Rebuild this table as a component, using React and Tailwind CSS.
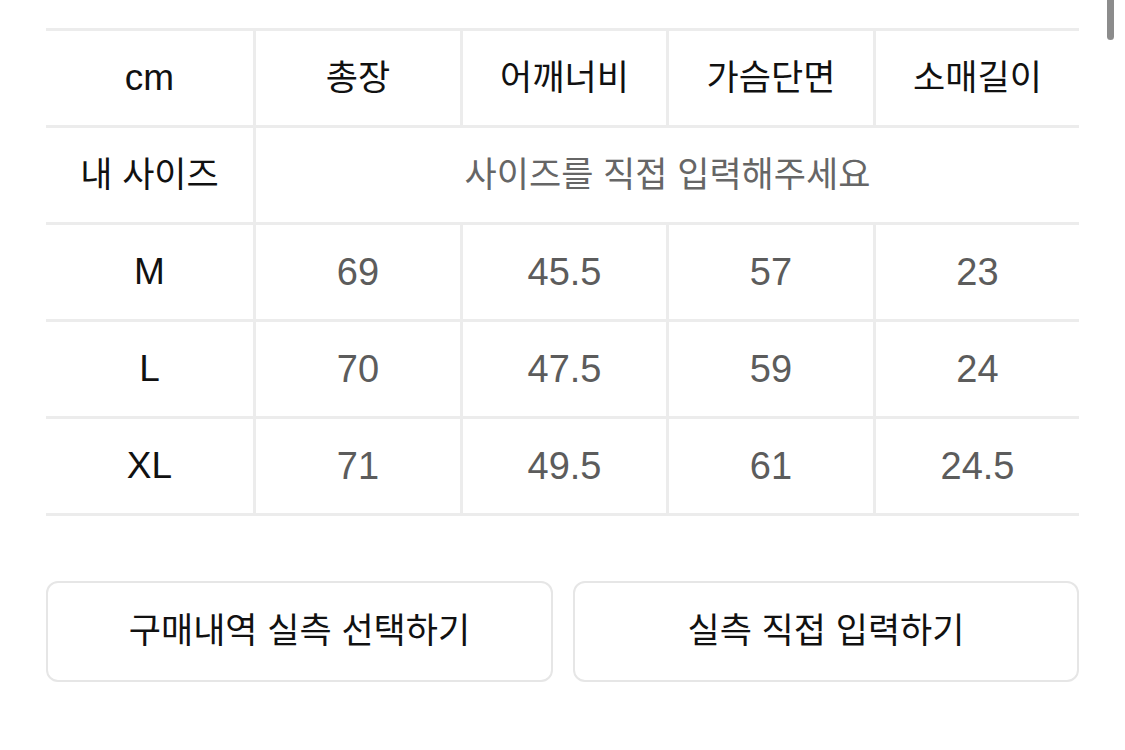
import React from 'react';

const columns = ['총장', '어깨너비', '가슴단면', '소매길이'];

const sizes = [
  { name: 'M', values: ['69', '45.5', '57', '23'] },
  { name: 'L', values: ['70', '47.5', '59', '24'] },
  { name: 'XL', values: ['71', '49.5', '61', '24.5'] },
];

const App = () => {
  return (
    <div
      className="relative w-[1125px] h-[750px] bg-white overflow-hidden"
      style={{ fontFamily: '"Liberation Sans", "Noto Sans CJK KR", sans-serif' }}
    >
      {/* scrollbar */}
      <div className="absolute right-[11px] top-[-6px] w-[7px] h-[46px] rounded-full bg-[#8c8c8c]" />

      <div className="ml-[46px] mt-[28px] w-[1033px]">
        <div className="border-t-[3px] border-[#ececec]">
          {/* header */}
          <div className="grid grid-cols-[207px_207px_206px_207px_206px] h-[97px] border-b-[3px] border-[#ececec]">
            <div className="flex items-center justify-center text-[37px] text-[#111]">cm</div>
            {columns.map(c => (
              <div key={c} className="flex items-center justify-center border-l-[3px] border-[#ececec] text-[35px] text-[#111]">
                {c}
              </div>
            ))}
          </div>

          {/* my size */}
          <div className="grid grid-cols-[207px_1fr] h-[97px] border-b-[3px] border-[#ececec]">
            <div className="flex items-center justify-center text-[35px] text-[#111]">내 사이즈</div>
            <div className="flex items-center justify-center border-l-[3px] border-[#ececec] text-[35px] text-[#666]">
              사이즈를 직접 입력해주세요
            </div>
          </div>

          {sizes.map(s => (
            <div key={s.name} className="grid grid-cols-[207px_207px_206px_207px_206px] h-[97px] border-b-[3px] border-[#ececec]">
              <div className="flex items-center justify-center text-[37px] text-[#111]">{s.name}</div>
              {s.values.map((v, i) => (
                <div key={i} className="flex items-center justify-center border-l-[3px] border-[#ececec] text-[38px] text-[#5c5c5c]">
                  {v}
                </div>
              ))}
            </div>
          ))}
        </div>

        <div className="mt-[65px] flex gap-[20px]">
          <button className="w-[507px] h-[101px] rounded-[12px] border-2 border-[#e6e6e6] bg-white text-[35px] text-[#111]">
            구매내역 실측 선택하기
          </button>
          <button className="w-[506px] h-[101px] rounded-[12px] border-2 border-[#e6e6e6] bg-white text-[35px] text-[#111]">
            실측 직접 입력하기
          </button>
        </div>
      </div>
    </div>
  );
};

export default App;
